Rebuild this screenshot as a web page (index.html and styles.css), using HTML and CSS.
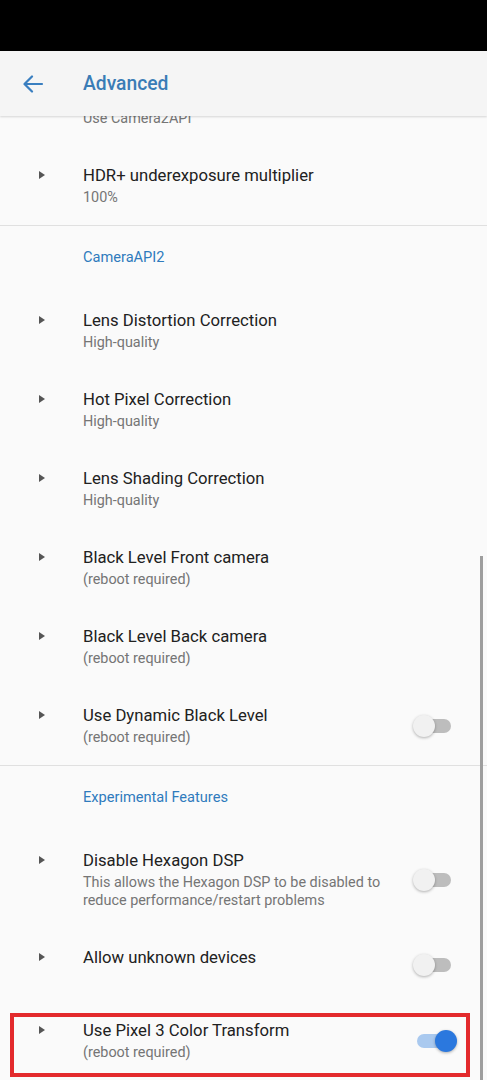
FILE: index.html
```html
<!DOCTYPE html>
<html lang="en">
<head>
    <meta charset="UTF-8">
    <meta name="viewport" content="width=device-width, initial-scale=1.0">
    <title>Advanced</title>
    <link rel="stylesheet" href="styles.css">
</head>
<body>

    <div class="status-bar"></div>

    <div class="app-bar">
        <svg class="back" width="22" height="18" viewBox="0 0 22 18">
            <path d="M20 9H3M10 1.5L2.5 9L10 16.5" fill="none" stroke="#3a7fc0" stroke-width="2.2" stroke-linecap="round" stroke-linejoin="round"/>
        </svg>
        <h1>Advanced</h1>
    </div>

    <div class="list">
        <!-- row scrolled mostly out of view -->
        <div class="pref first">
            <span class="spacer"></span>
            <div class="text">
                <div class="summary">Use Camera2API</div>
            </div>
        </div>

        <div class="pref">
            <span class="arrow"></span>
            <div class="text">
                <div class="title">HDR+ underexposure multiplier</div>
                <div class="summary">100%</div>
            </div>
        </div>

        <div class="divider"></div>
        <div class="category">CameraAPI2</div>

        <div class="pref">
            <span class="arrow"></span>
            <div class="text">
                <div class="title">Lens Distortion Correction</div>
                <div class="summary">High-quality</div>
            </div>
        </div>
        <div class="pref">
            <span class="arrow"></span>
            <div class="text">
                <div class="title">Hot Pixel Correction</div>
                <div class="summary">High-quality</div>
            </div>
        </div>
        <div class="pref">
            <span class="arrow"></span>
            <div class="text">
                <div class="title">Lens Shading Correction</div>
                <div class="summary">High-quality</div>
            </div>
        </div>
        <div class="pref">
            <span class="arrow"></span>
            <div class="text">
                <div class="title">Black Level Front camera</div>
                <div class="summary">(reboot required)</div>
            </div>
        </div>
        <div class="pref">
            <span class="arrow"></span>
            <div class="text">
                <div class="title">Black Level Back camera</div>
                <div class="summary">(reboot required)</div>
            </div>
        </div>
        <div class="pref">
            <span class="arrow"></span>
            <div class="text">
                <div class="title">Use Dynamic Black Level</div>
                <div class="summary">(reboot required)</div>
            </div>
            <span class="switch"></span>
        </div>

        <div class="divider"></div>
        <div class="category">Experimental Features</div>

        <div class="pref">
            <span class="arrow"></span>
            <div class="text">
                <div class="title">Disable Hexagon DSP</div>
                <div class="summary">This allows the Hexagon DSP to be disabled to reduce performance/restart problems</div>
            </div>
            <span class="switch"></span>
        </div>
        <div class="pref single">
            <span class="arrow"></span>
            <div class="text">
                <div class="title">Allow unknown devices</div>
            </div>
            <span class="switch"></span>
        </div>
        <div class="pref">
            <span class="arrow"></span>
            <div class="text">
                <div class="title">Use Pixel 3 Color Transform</div>
                <div class="summary">(reboot required)</div>
            </div>
            <span class="switch on"></span>
            <div class="highlight"></div>
        </div>

        <div class="scrollbar"></div>
    </div>

</body>
</html>
```

FILE: styles.css
```css
body {
    margin: 0;
    width: 487px;
    height: 1080px;
    overflow: hidden;
    font-family: Roboto, "Noto Sans", sans-serif;
    background-color: #fafafa;
    color: #212121;
}
.status-bar {
    height: 51px;
    background: #000;
}
.app-bar {
    height: 65px;
    display: flex;
    align-items: center;
    background: #f5f5f5;
    box-shadow: 0 1px 2px rgba(0,0,0,0.15);
    position: relative;
    z-index: 2;
}
.back {
    margin-left: 22px;
    margin-right: 39px;
}
.app-bar h1 {
    margin: 0;
    font-size: 19.3px;
    font-weight: 500;
    color: #3a7cb6;
}
.list {
    position: relative;
    height: 964px;
    overflow: hidden;
}
.pref {
    position: relative;
    display: flex;
    align-items: center;
    padding: 19px 0 18px 0;
    min-height: 42px;
}
.pref.first {
    margin-top: -25px;
    min-height: 18px;
}
.pref.single {
    min-height: 36px;
}
.arrow,
.spacer {
    align-self: flex-start;
    width: 83px;
    height: 22px;
    flex-shrink: 0;
    position: relative;
}
.spacer {
    height: 18px;
}
.arrow::before {
    content: "";
    position: absolute;
    left: 39px;
    top: 6px;
    border-left: 6px solid #555;
    border-top: 4.5px solid transparent;
    border-bottom: 4.5px solid transparent;
}
.text {
    flex: 1;
    align-self: flex-start;
}
.title {
    font-size: 16.7px;
    line-height: 22px;
    margin-bottom: 2px;
    color: #212121;
}
.summary {
    font-size: 14.4px;
    line-height: 18px;
    color: #757575;
    padding-right: 8px;
}
.divider {
    height: 1px;
    background: #e0e0e0;
}
.category {
    padding: 21px 0 24px 83px;
    font-size: 14.6px;
    line-height: 20px;
    color: #2f7bbd;
}
.switch {
    position: relative;
    width: 44px;
    height: 22px;
    margin-right: 30px;
    margin-left: 12px;
    flex-shrink: 0;
}
.switch::before {
    content: "";
    position: absolute;
    left: 4px;
    right: 6px;
    top: 4px;
    height: 14px;
    border-radius: 7px;
    background: #bdbdbd;
}
.switch::after {
    content: "";
    position: absolute;
    left: 0;
    top: 0;
    width: 22px;
    height: 22px;
    border-radius: 50%;
    background: #f1f1f1;
    box-shadow: 0 1px 3px rgba(0,0,0,0.3);
}
.switch.on::before {
    background: #a9c9ef;
}
.switch.on::after {
    left: auto;
    right: 0;
    background: #2b78de;
}
.highlight {
    position: absolute;
    left: 10px;
    top: 12px;
    width: 452px;
    height: 56px;
    border: 4px solid #e32a2c;
}
.scrollbar {
    position: absolute;
    right: 4px;
    top: 440px;
    width: 3px;
    height: 530px;
    background: #9e9e9e;
}
```
